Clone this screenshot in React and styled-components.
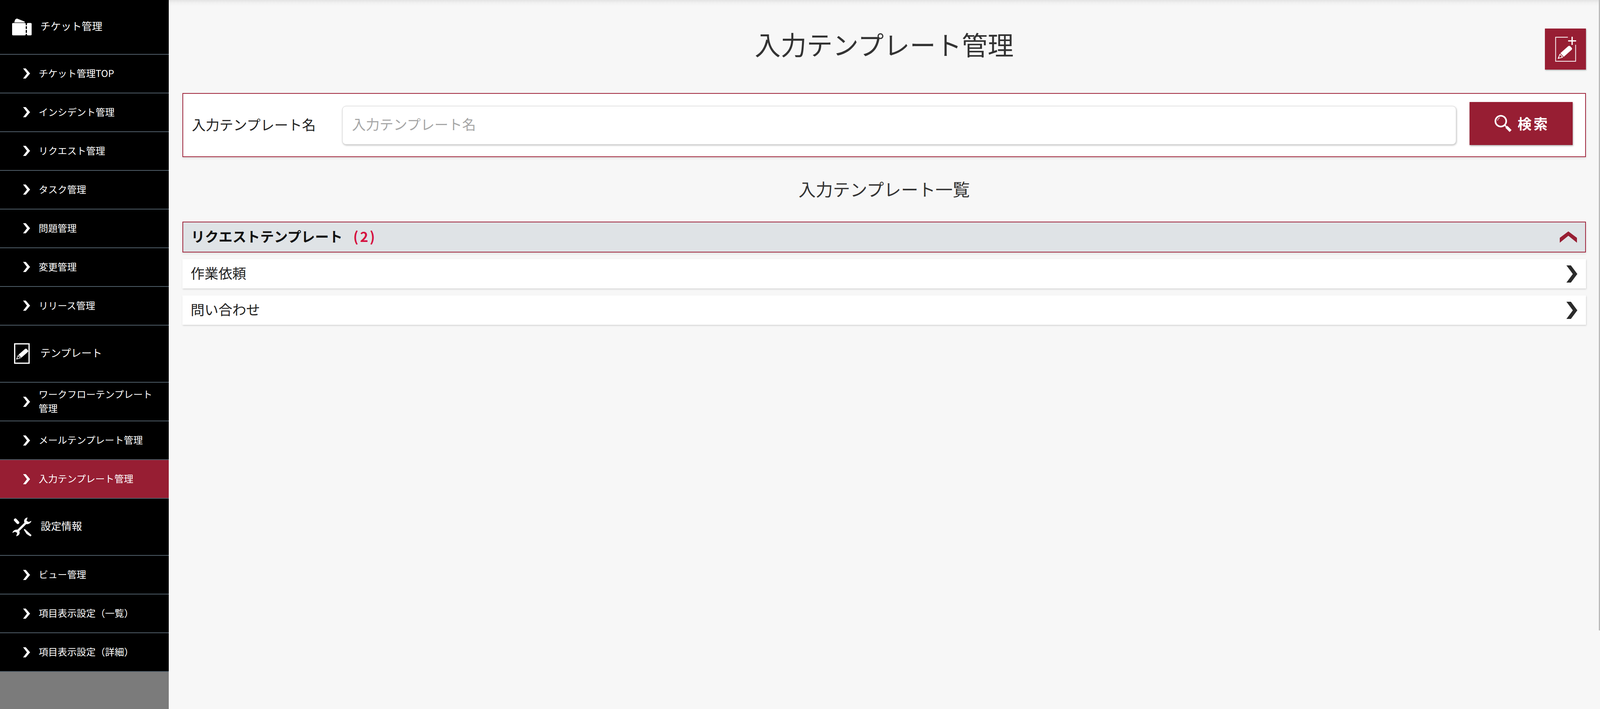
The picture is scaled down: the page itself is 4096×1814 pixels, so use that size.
import styled, { createGlobalStyle } from "styled-components";

const GlobalStyle = createGlobalStyle`
  html, body {
    margin: 0;
    padding: 0;
    height: 100%;
    overflow: hidden;
    background: #f7f7f7;
  }
  body {
    font-family: "Noto Sans CJK JP", "Noto Sans", sans-serif;
    color: #222;
  }
  * {
    box-sizing: border-box;
  }
`;

const Page = styled.div`
  display: flex;
  width: 100vw;
  height: 100vh;
`;

const Sidebar = styled.nav`
  position: relative;
  display: flex;
  flex-direction: column;
  flex: none;
  width: 432px;
  height: 100%;
  background: #7b7b7b;
  box-shadow: 1px 0 1px rgba(0, 0, 0, 0.14);
`;

const NavHeader = styled.div`
  display: flex;
  align-items: center;
  height: ${(p) => p.$h}px;
  padding-left: ${(p) => p.$left}px;
  background: #000;
  border-bottom: 2px solid #505e69;
  color: #fff;
  font-size: 26.5px;
`;

const NavHeaderText = styled.span`
  margin-bottom: 7px;
`;

const NavIcon = styled.svg`
  display: block;
  flex: none;
  margin-right: ${(p) => p.$gap}px;
`;

const NavRow = styled.div`
  display: flex;
  align-items: center;
  height: 99px;
  padding-left: 59px;
  background: ${(p) => (p.$active ? "#971e33" : "#000")};
  border-bottom: 2px solid #505e69;
  color: #fff;
  font-size: 24.3px;
  line-height: 36px;
`;

const NavChevron = styled.svg`
  display: block;
  flex: none;
  width: 18px;
  height: 26px;
  margin-right: 22px;
`;

const NavLabel = styled.span`
  max-width: 300px;
  margin-bottom: 3px;
`;

const Main = styled.main`
  position: relative;
  flex: 1;
  min-width: 0;
  padding: 0 36px 0 35px;
  background: #f7f7f7;

  &::before {
    content: "";
    position: absolute;
    top: 0;
    left: 0;
    right: 0;
    height: 16px;
    background: linear-gradient(#e3e3e3, #f1f1f1 45%, #f7f7f7);
  }
  &::after {
    content: "";
    position: absolute;
    top: 0;
    right: 0;
    width: 3px;
    height: 1613px;
    background: #bbb;
  }
`;

const TitleBar = styled.header`
  position: relative;
  display: grid;
  grid-template-columns: 105px 1fr 105px;
  height: 238px;
`;

const PageTitle = styled.h1`
  grid-column: 2;
  margin: 65px 0 0;
  color: #333;
  font-size: 66.5px;
  font-weight: 400;
  line-height: 94px;
  text-align: center;
`;

const AddButton = styled.button`
  display: flex;
  align-items: center;
  justify-content: center;
  grid-column: 3;
  width: 105px;
  height: 105px;
  margin-top: 73px;
  padding: 0;
  border: 0;
  background: #971e33;
  box-shadow: 1px 2px 3px rgba(0, 0, 0, 0.3);
`;

const SearchPanel = styled.section`
  display: flex;
  align-items: center;
  height: 164px;
  padding: 0 32px 0 22px;
  background: #fff;
  border: 2px solid #a0253c;
  box-shadow: 0 3px 6px rgba(0, 0, 0, 0.1);
`;

const SearchLabel = styled.label`
  flex: none;
  width: 385px;
  margin-bottom: 5px;
  color: #222;
  font-size: 35.4px;
`;

const SearchInput = styled.input`
  flex: 1;
  min-width: 0;
  height: 99px;
  margin-right: 34px;
  padding: 0 24px 7px;
  background: #fff;
  border: 1px solid #d2d2d2;
  border-radius: 10px;
  box-shadow: 1px 2px 4px rgba(0, 0, 0, 0.25);
  font-family: inherit;
  font-size: 35.4px;
  outline: none;

  &::placeholder {
    color: #a6a6a6;
    opacity: 1;
  }
`;

const SearchButton = styled.button`
  display: flex;
  align-items: center;
  justify-content: center;
  flex: none;
  gap: 14px;
  width: 264px;
  height: 110px;
  margin-bottom: 8px;
  padding: 0;
  border: 0;
  background: #971e33;
  box-shadow: 1px 2px 4px rgba(0, 0, 0, 0.35);
  color: #fff;
  font-family: inherit;
  font-size: 36px;
  font-weight: 700;
  letter-spacing: 5px;
`;

const ButtonText = styled.span`
  margin-right: -5px;
  margin-bottom: 3px;
`;

const ListTitle = styled.h2`
  display: flex;
  align-items: center;
  justify-content: center;
  height: 165px;
  margin: 0;
  padding-bottom: 3px;
  color: #333;
  font-size: 44px;
  font-weight: 400;
`;

const GroupHeader = styled.div`
  display: flex;
  align-items: center;
  justify-content: space-between;
  height: 79px;
  margin-bottom: 17px;
  padding: 0 21px 0 20px;
  background: #dfe3e6;
  border: 2px solid #a0253c;
  box-shadow: 0 3px 6px rgba(0, 0, 0, 0.1);
`;

const GroupTitle = styled.div`
  margin-bottom: 7px;
  color: #111;
  font-size: 35.4px;
  font-weight: 700;
`;

const GroupCount = styled.span`
  margin-left: 27px;
  color: #d5103f;
  letter-spacing: 4px;
`;

const TemplateRows = styled.div`
  display: flex;
  flex-direction: column;
  gap: 18px;
`;

const TemplateRow = styled.div`
  display: flex;
  align-items: center;
  justify-content: space-between;
  height: 75px;
  padding: 0 22px 0 21px;
  background: #fff;
  box-shadow: 1px 2px 4px rgba(0, 0, 0, 0.16);
  color: #222;
  font-size: 35.6px;
`;

const RowText = styled.span`
  margin-bottom: 7px;
`;

const Glyph = styled.svg`
  display: block;
  flex: none;
`;

function Pencil({ x, y, angle, scale, stroke }) {
  return (
    <g transform={`translate(${x} ${y}) rotate(${angle}) scale(${scale})`} fill="#fff">
      <path d="M0 0 L17 -8 L17 8 Z" fill="none" stroke="#fff" strokeWidth={stroke} strokeLinejoin="round" />
      <path d="M0 0 L6 -3 L6 3 Z" />
      <path d="M21 -10 H62 Q69 -10 69 -3 V3 Q69 10 62 10 H21 Z" />
    </g>
  );
}

function TicketIcon() {
  return (
    <NavIcon $gap={22} width="50" height="44" viewBox="0 0 79 68" fill="#fff">
      <path d="M9 16 Q11 0 20 0 L50 12 Q53 15 49 16 Z" />
      <rect x="0" y="18" width="55" height="50" rx="4" />
      <rect x="60" y="18" width="19" height="50" rx="4" />
      <rect x="54" y="27" width="7" height="4" />
      <rect x="54" y="42" width="7" height="4" />
      <rect x="54" y="58" width="7" height="4" />
    </NavIcon>
  );
}

function TemplateIcon() {
  return (
    <NavIcon $gap={27} width="40" height="53" viewBox="0 0 63 83">
      <rect x="2.5" y="2.5" width="58" height="78" fill="none" stroke="#fff" strokeWidth="5" />
      <Pencil x={10} y={64} angle={-41} scale={0.84} stroke={3} />
    </NavIcon>
  );
}

function ToolsIcon() {
  return (
    <NavIcon $gap={23} width="50" height="50" viewBox="85 115 240 240">
      <path d="M125 150 L155 182" stroke="#fff" strokeWidth="36" strokeLinecap="round" fill="none" />
      <path d="M228 268 L240 260 L322 335 Q322 350 308 352 L262 322 Z" fill="#fff" />
      <path d="M150 290 L260 180" stroke="#fff" strokeWidth="28" fill="none" />
      <path d="M275 120 C245 125 225 150 235 180 L258 200 C285 205 315 190 322 160 L290 175 L262 160 Z" fill="#fff" />
      <path d="M135 350 C165 345 185 320 175 290 L152 270 C125 265 95 280 88 310 L120 295 L148 310 Z" fill="#fff" />
    </NavIcon>
  );
}

function SmallChevron() {
  return (
    <NavChevron viewBox="0 0 18 26">
      <polygon points="0,0 7,0 18,13 7,26 0,26 10,13" fill="#fff" />
    </NavChevron>
  );
}

function AddTemplateIcon() {
  return (
    <Glyph width="54" height="64" viewBox="0 0 84 100">
      <path d="M51 2 H2 V98 H82 V32" fill="none" stroke="#fff" strokeWidth="3" />
      <path d="M68 0 V33 M52 16.5 H84" fill="none" stroke="#fff" strokeWidth="5" />
      <Pencil x={12} y={87} angle={-41.6} scale={1} stroke={3} />
    </Glyph>
  );
}

function SearchIcon() {
  return (
    <Glyph width="45" height="45" viewBox="0 0 70 70">
      <circle cx="25" cy="25" r="21.5" fill="none" stroke="#fff" strokeWidth="6.5" />
      <path d="M12 23 Q13 15 21 11" fill="none" stroke="#fff" strokeWidth="2" />
      <path d="M41 41 L47 47" stroke="#fff" strokeWidth="5" />
      <path d="M47 47 L64 64" stroke="#fff" strokeWidth="11" />
    </Glyph>
  );
}

function ChevronUp() {
  return (
    <Glyph width="44" height="29" viewBox="0 0 44 29">
      <polygon points="22,0 44,16.6 44,29 22,11.3 0,29 0,16.6" fill="#971e33" />
    </Glyph>
  );
}

function ChevronRight() {
  return (
    <Glyph width="28" height="44" viewBox="0 0 28 44">
      <polygon points="0,0 11.5,0 28,22 11.5,44 0,44 16.4,22" fill="#2b2b2b" />
    </Glyph>
  );
}

const navGroups = [
  {
    title: "チケット管理",
    icon: <TicketIcon />,
    h: 139.5,
    left: 31,
    items: ["チケット管理TOP", "インシデント管理", "リクエスト管理", "タスク管理", "問題管理", "変更管理", "リリース管理"],
  },
  {
    title: "テンプレート",
    icon: <TemplateIcon />,
    h: 146.5,
    left: 36,
    items: ["ワークフローテンプレート管理", "メールテンプレート管理", "入力テンプレート管理"],
  },
  {
    title: "設定情報",
    icon: <ToolsIcon />,
    h: 146,
    left: 31,
    items: ["ビュー管理", "項目表示設定（一覧）", "項目表示設定（詳細）"],
  },
];

const templates = ["作業依頼", "問い合わせ"];

export default function App() {
  return (
    <Page>
      <GlobalStyle />
      <Sidebar>
        {navGroups.map((group) => (
          <div key={group.title}>
            <NavHeader $h={group.h} $left={group.left}>
              {group.icon}
              <NavHeaderText>{group.title}</NavHeaderText>
            </NavHeader>
            {group.items.map((item) => (
              <NavRow key={item} $active={item === "入力テンプレート管理"}>
                <SmallChevron />
                <NavLabel>{item}</NavLabel>
              </NavRow>
            ))}
          </div>
        ))}
      </Sidebar>
      <Main>
        <TitleBar>
          <PageTitle>入力テンプレート管理</PageTitle>
          <AddButton aria-label="新規作成">
            <AddTemplateIcon />
          </AddButton>
        </TitleBar>
        <SearchPanel>
          <SearchLabel>入力テンプレート名</SearchLabel>
          <SearchInput placeholder="入力テンプレート名" />
          <SearchButton>
            <SearchIcon />
            <ButtonText>検索</ButtonText>
          </SearchButton>
        </SearchPanel>
        <ListTitle>入力テンプレート一覧</ListTitle>
        <GroupHeader>
          <GroupTitle>
            リクエストテンプレート
            <GroupCount>(2)</GroupCount>
          </GroupTitle>
          <ChevronUp />
        </GroupHeader>
        <TemplateRows>
          {templates.map((name) => (
            <TemplateRow key={name}>
              <RowText>{name}</RowText>
              <ChevronRight />
            </TemplateRow>
          ))}
        </TemplateRows>
      </Main>
    </Page>
  );
}
